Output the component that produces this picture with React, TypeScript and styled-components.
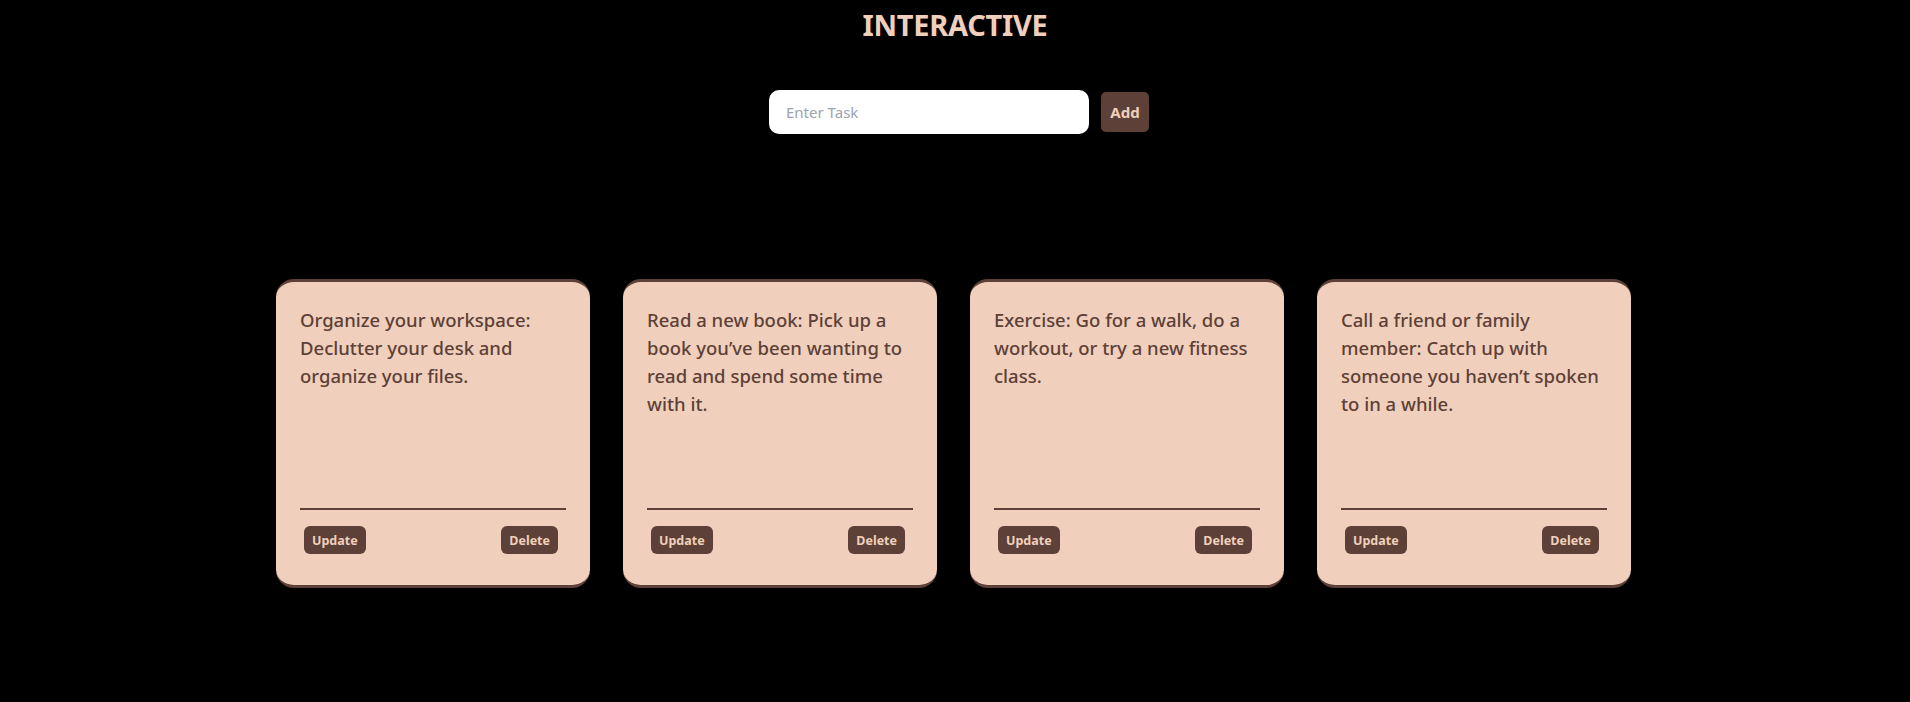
import styled, { createGlobalStyle } from "styled-components";

const Color = {
  Brown: "#5d4037",
  Peach: "#f0d0bc",
  Black: "#000000",
};

const tasks = [
  {
    id: 1,
    text: "Organize your workspace: Declutter your desk and organize your files.",
  },
  {
    id: 2,
    text: "Read a new book: Pick up a book you\u2019ve been wanting to read and spend some time with it.",
  },
  {
    id: 3,
    text: "Exercise: Go for a walk, do a workout, or try a new fitness class.",
  },
  {
    id: 4,
    text: "Call a friend or family member: Catch up with someone you haven\u2019t spoken to in a while.",
  },
];

const GlobalStyle = createGlobalStyle`
  * {
    box-sizing: border-box;
  }

  body {
    margin: 0;
    background-color: ${Color.Black};
    font-family: "Noto Sans", "Open Sans", sans-serif;
  }
`;

export default function App() {
  return (
    <>
      <GlobalStyle />
      <Page>
        <Title>INTERACTIVE</Title>
        <Form onSubmit={(e) => e.preventDefault()}>
          <TaskInput type="text" placeholder="Enter Task" />
          <AddButton type="submit">Add</AddButton>
        </Form>
        <CardList>
          {tasks.map((task) => (
            <Card key={task.id}>
              <CardText>{task.text}</CardText>
              <Divider />
              <CardFooter>
                <SmallButton>Update</SmallButton>
                <SmallButton>Delete</SmallButton>
              </CardFooter>
            </Card>
          ))}
        </CardList>
      </Page>
    </>
  );
}

const Page = styled.main`
  display: flex;
  flex-direction: column;
  align-items: center;
  min-height: 702px;
  padding-top: 7px;
`;

const Title = styled.h1`
  margin: 0;
  font-size: 29px;
  font-weight: 700;
  line-height: 36px;
  letter-spacing: -0.3px;
  color: ${Color.Peach};
`;

const Form = styled.form`
  display: flex;
  align-items: center;
  gap: 12px;
  margin-top: 47px;
  margin-left: 8px;
`;

const TaskInput = styled.input`
  width: 320px;
  height: 44px;
  padding: 0 17px;
  border: none;
  border-radius: 10px;
  outline: none;
  font-family: inherit;
  font-size: 15px;
  color: ${Color.Brown};
  background-color: #ffffff;

  &::placeholder {
    color: #9ca3af;
  }
`;

const AddButton = styled.button`
  width: 48px;
  height: 40px;
  padding: 0;
  border: none;
  border-radius: 5px;
  font-family: inherit;
  font-size: 15px;
  font-weight: 700;
  color: ${Color.Peach};
  background-color: ${Color.Brown};
  cursor: pointer;
`;

const CardList = styled.section`
  display: flex;
  gap: 33px;
  margin-top: 145px;
  margin-right: 3px;
`;

const Card = styled.article`
  display: flex;
  flex-direction: column;
  width: 314px;
  height: 309px;
  padding: 24px 24px 31px;
  border-top: 3px solid ${Color.Brown};
  border-bottom: 3px solid ${Color.Brown};
  border-radius: 18px;
  background-color: ${Color.Peach};
`;

const CardText = styled.p`
  flex: 1;
  margin: 0;
  font-size: 18.5px;
  font-weight: 500;
  line-height: 28px;
  color: ${Color.Brown};
`;

const Divider = styled.hr`
  width: 100%;
  height: 2px;
  margin: 0;
  border: none;
  background-color: ${Color.Brown};
`;

const CardFooter = styled.div`
  display: flex;
  justify-content: space-between;
  margin-top: 16px;
  padding: 0 8px 0 4px;
`;

const SmallButton = styled.button`
  height: 28px;
  padding: 0 8px;
  border: none;
  border-radius: 6px;
  font-family: inherit;
  font-size: 12.5px;
  font-weight: 700;
  color: ${Color.Peach};
  background-color: ${Color.Brown};
  cursor: pointer;
`;
